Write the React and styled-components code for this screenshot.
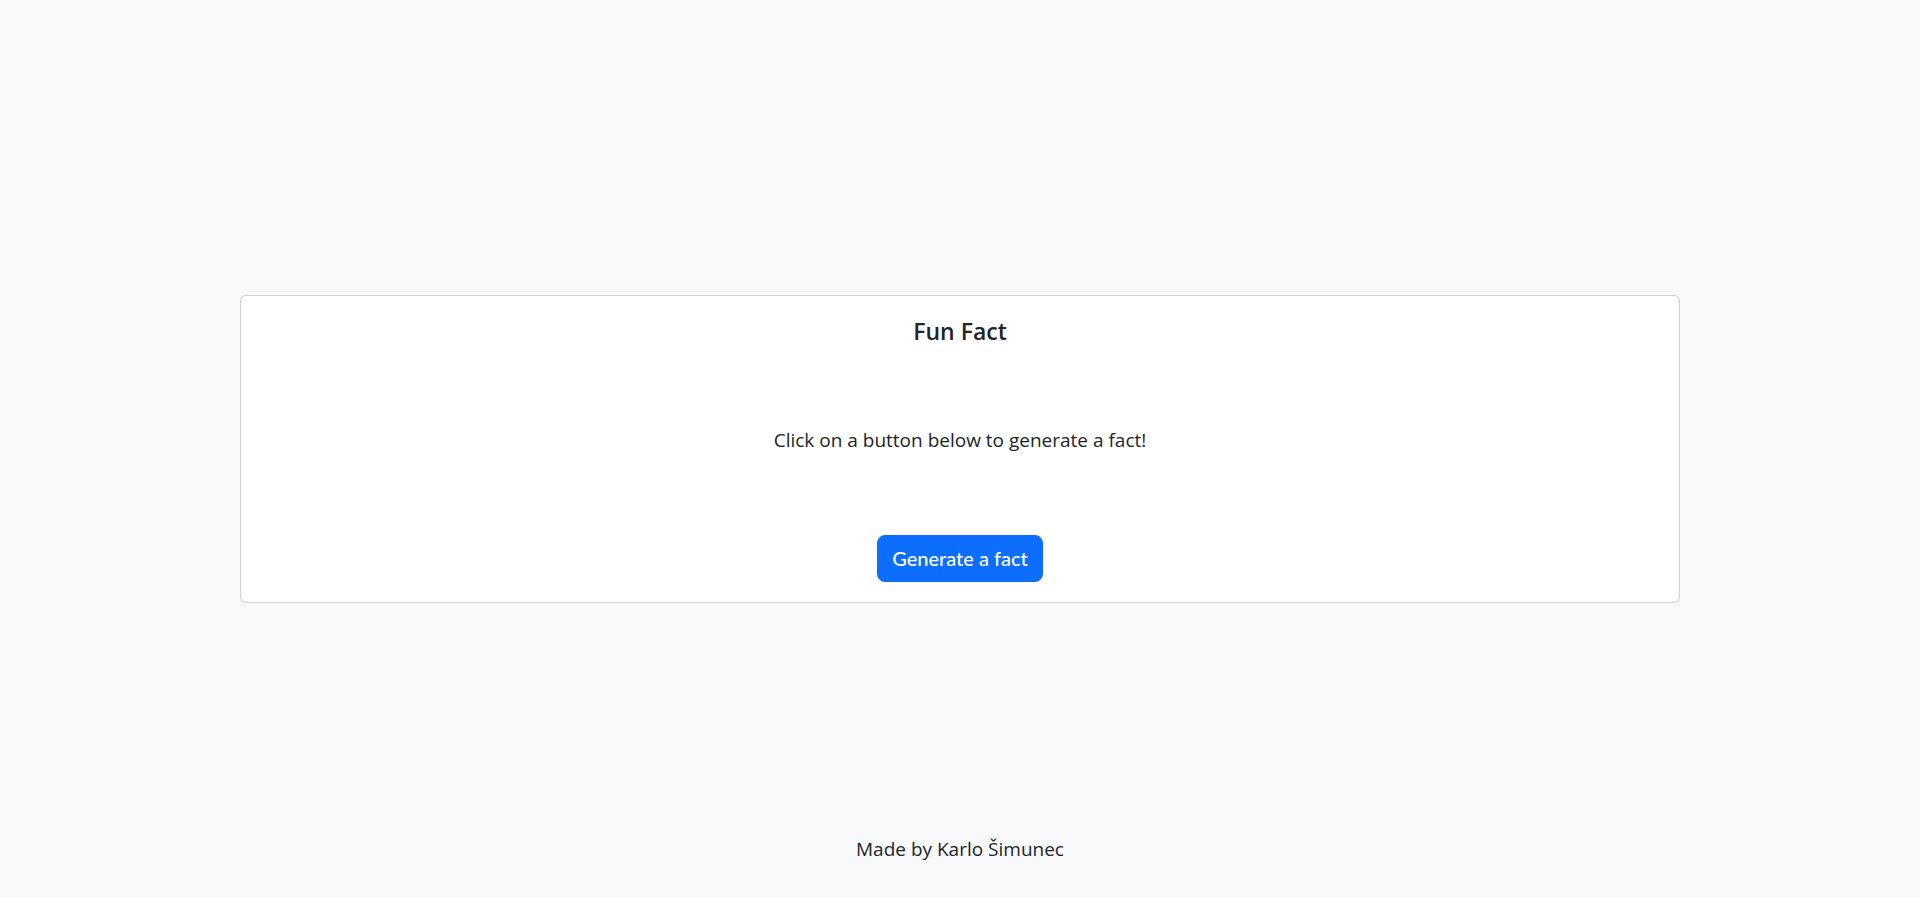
import React, { useState } from "react";
import styled, { createGlobalStyle } from "styled-components";

const facts = [
	"Honey never spoils.",
	"Octopuses have three hearts.",
	"Bananas are berries, but strawberries are not.",
	"A day on Venus is longer than a year on Venus.",
];

const GlobalStyle = createGlobalStyle`
	html, body {
		margin: 0;
		padding: 0;
		background: #f8f9fa;
		color: #212529;
		font-family: "Open Sans", "Noto Sans", sans-serif;
	}
`;

export default function App() {
	const [fact, setFact] = useState("");

	const generate = () => {
		setFact(facts[Math.floor(Math.random() * facts.length)]);
	};

	return (
		<Page>
			<GlobalStyle />
			<Spacer />
			<Card>
				<Title>Fun Fact</Title>
				<FactBox>
					<FactText>{fact || "Click on a button below to generate a fact!"}</FactText>
				</FactBox>
				<Button onClick={generate}>Generate a fact</Button>
			</Card>
			<Footer>Made by Karlo Šimunec</Footer>
		</Page>
	);
}

const Page = styled.div`
	min-height: 100vh;
	display: grid;
	grid-template-rows: 1fr auto 1fr;
	justify-items: center;
`;

const Spacer = styled.div``;

const Card = styled.div`
	width: 75%;
	box-sizing: border-box;
	background: #fff;
	border: 1px solid rgba(0, 0, 0, 0.175);
	border-radius: 6px;
	padding: 21px 16px 20px;
	display: flex;
	flex-direction: column;
	align-items: center;
`;

const Title = styled.h4`
	margin: 0;
	font-size: 23px;
	font-weight: 600;
	line-height: 28px;
`;

const FactBox = styled.div`
	height: 190px;
	display: flex;
	align-items: center;
	justify-content: center;
`;

const FactText = styled.p`
	margin: 0;
	font-size: 19px;
	line-height: 30px;
	text-align: center;
`;

const Button = styled.button`
	height: 47px;
	padding: 0 14px;
	font-family: Lato, "Open Sans", sans-serif;
	font-size: 20px;
	font-weight: 500;
	color: #fff;
	background: #0d6efd;
	border: 1px solid #0d6efd;
	border-radius: 8px;
	cursor: pointer;

	&:hover {
		background: #0b5ed7;
	}
`;

const Footer = styled.footer`
	align-self: end;
	padding-bottom: 33px;
	font-size: 19px;
	line-height: 30px;
`;
